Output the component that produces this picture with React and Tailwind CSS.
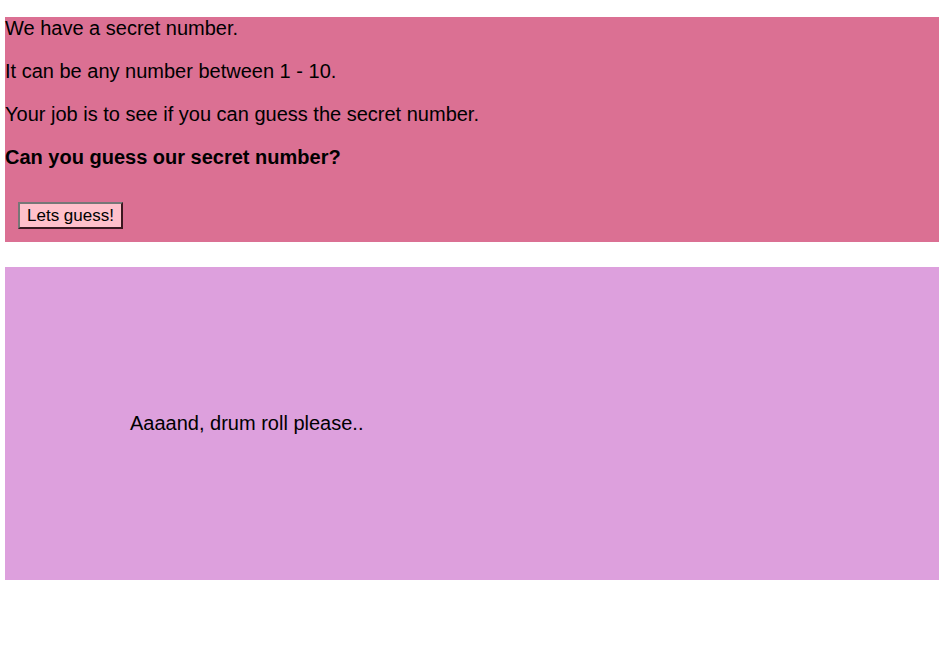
export default function App() {
  return (
    <div className="bg-white min-h-[650px] pt-[17px] text-black" style={{ fontFamily: '"Liberation Sans", Arial, sans-serif' }}>
      <section className="mx-[5px] w-[934px] bg-[#DB7093] pb-[13px]">
        <p className="text-[20px] leading-[23px] mb-[20px]">We have a secret number.</p>
        <p className="text-[20px] leading-[23px] mb-[20px]">It can be any number between 1 - 10.</p>
        <p className="text-[20px] leading-[23px] mb-[20px]">Your job is to see if you can guess the secret number.</p>
        <p className="text-[20px] leading-[23px] font-bold mb-[33px]">Can you guess our secret number?</p>
        <button className="ml-[13px] h-[27px] w-[105px] bg-[#FFC0CB] text-[17px] leading-[19px] border-2 border-t-[#777] border-l-[#777] border-b-[#3a1820] border-r-[#3a1820] text-black">
          Lets guess!
        </button>
      </section>
      <section className="mx-[5px] mt-[25px] w-[934px] h-[313px] bg-[#DDA0DD] pl-[125px] flex items-center">
        <p className="text-[20px] leading-[23px]">Aaaand, drum roll please..</p>
      </section>
    </div>
  );
}
